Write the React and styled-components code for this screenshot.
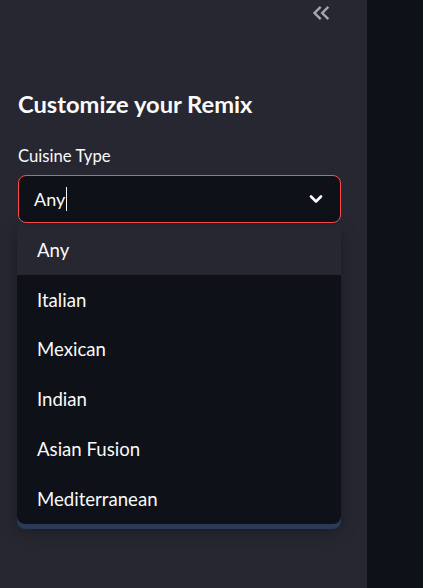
import React from "react";
import styled, { createGlobalStyle } from "styled-components";

const GlobalStyle = createGlobalStyle`
  html, body {
    margin: 0;
    padding: 0;
    background: #0e1117;
    font-family: Lato, "Noto Sans", sans-serif;
    color: #fafafa;
  }
`;

const Page = styled.div`
  display: flex;
  height: 100vh;
  overflow: hidden;
`;

const Sidebar = styled.aside`
  position: relative;
  width: 367px;
  flex-shrink: 0;
  background: #262730;
  padding: 89px 26px 0 18px;
  box-sizing: border-box;
`;

const Main = styled.main`
  flex: 1;
  background: #0e1117;
`;

const CollapseButton = styled.button`
  position: absolute;
  top: -1px;
  left: 307px;
  width: 28px;
  height: 28px;
  padding: 0;
  border: none;
  background: none;
  color: #a3a8b4;
  cursor: pointer;
`;

const Title = styled.h3`
  margin: 0 0 26px;
  font-size: 23.7px;
  font-weight: 700;
  line-height: 30px;
  color: #fafafa;
`;

const Label = styled.label`
  display: block;
  font-size: 16.7px;
  line-height: 22px;
  margin-bottom: 8px;
  color: #fafafa;
`;

const SelectWrap = styled.div`
  position: relative;
  width: 323px;
`;

const SelectBox = styled.div`
  display: flex;
  align-items: center;
  justify-content: space-between;
  height: 48px;
  padding: 0 17px 0 15px;
  box-sizing: border-box;
  background: #0e1117;
  border: 1px solid #ff4b4b;
  border-radius: 8px;
`;

const Value = styled.div`
  display: flex;
  align-items: center;
  font-size: 18px;
  color: #fafafa;
`;

const Caret = styled.span`
  display: inline-block;
  width: 1px;
  height: 24px;
  margin-left: 1px;
  background: #fafafa;
`;

const Menu = styled.ul`
  position: absolute;
  top: 50px;
  left: -1px;
  width: 324px;
  margin: 0;
  padding: 0;
  list-style: none;
  background: #0e1117;
  border-radius: 0 0 8px 8px;
  box-shadow: 0 5px 0 #293b57, 0 6px 16px rgba(0, 0, 0, 0.35);
  overflow: hidden;
`;

const Option = styled.li`
  display: flex;
  align-items: center;
  height: 49.8px;
  padding-left: 20px;
  font-size: 18.6px;
  color: #fafafa;
  background: ${({ active }) => (active ? "#262730" : "transparent")};
`;

const cuisines = ["Any", "Italian", "Mexican", "Indian", "Asian Fusion", "Mediterranean"];

const DoubleLeft = () => (
  <svg width="28" height="28" viewBox="0 0 24 24" fill="currentColor">
    <path d="M17.59 18L19 16.59 14.42 12 19 7.41 17.59 6l-6 6z" />
    <path d="M11 18l1.41-1.41L7.83 12l4.58-4.59L11 6l-6 6z" />
  </svg>
);

const Chevron = () => (
  <svg width="14" height="10" viewBox="0 0 14 10" fill="none">
    <polyline points="2,2.5 7,7.5 12,2.5" stroke="#fafafa" strokeWidth="2.6" strokeLinecap="round" strokeLinejoin="round" />
  </svg>
);

export default function App() {
  return (
    <>
      <GlobalStyle />
      <Page>
        <Sidebar>
          <CollapseButton aria-label="Collapse sidebar">
            <DoubleLeft />
          </CollapseButton>
          <Title>Customize your Remix</Title>
          <Label>Cuisine Type</Label>
          <SelectWrap>
            <SelectBox>
              <Value>
                Any
                <Caret />
              </Value>
              <Chevron />
            </SelectBox>
            <Menu>
              {cuisines.map((c, i) => (
                <Option key={c} active={i === 0}>
                  {c}
                </Option>
              ))}
            </Menu>
          </SelectWrap>
        </Sidebar>
        <Main />
      </Page>
    </>
  );
}
